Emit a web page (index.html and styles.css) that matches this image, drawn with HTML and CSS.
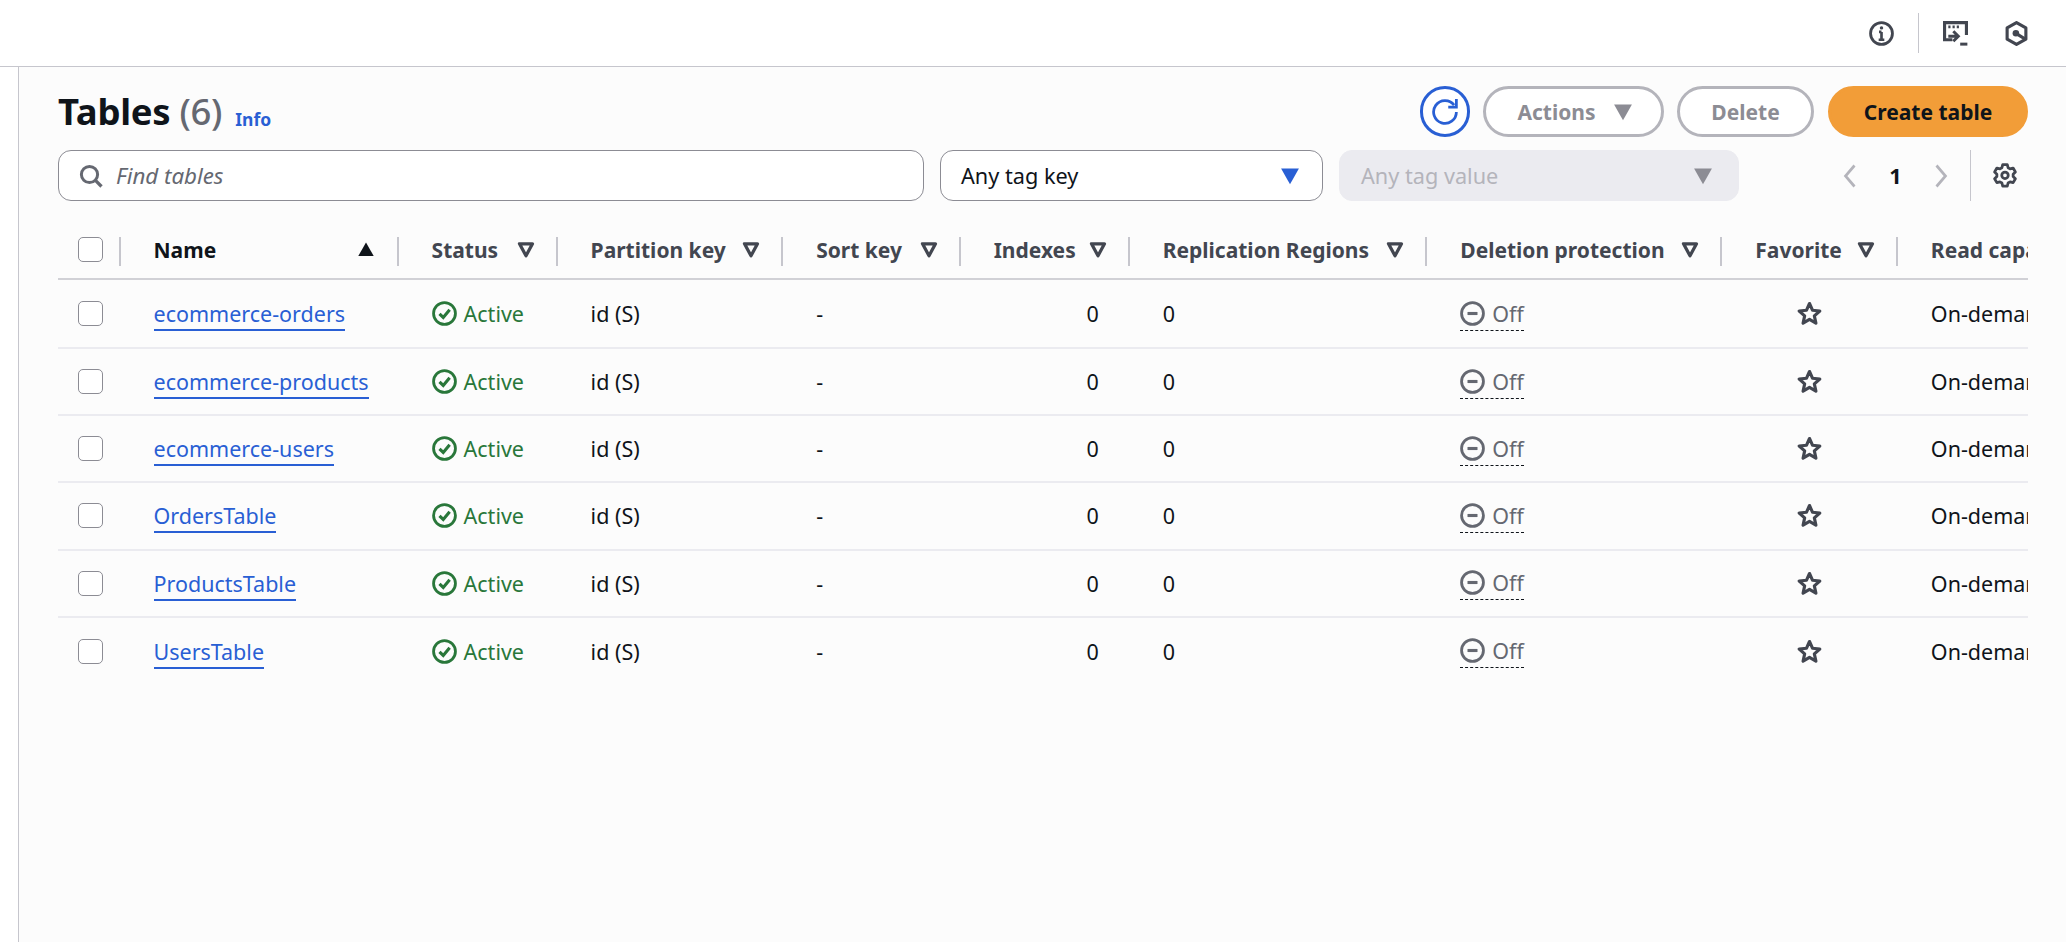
FILE: index.html
```html
<!DOCTYPE html>
<html lang="en">
<head>
<meta charset="utf-8">
<title>Tables</title>
<link rel="stylesheet" href="styles.css">
</head>
<body>
<svg class="defs" width="0" height="0" aria-hidden="true">
  <symbol id="i-active" viewBox="0 0 16 16"><circle cx="8" cy="8" r="7" fill="none" stroke="currentColor" stroke-width="1.8"/><path d="M4.8 8.2 7.2 10.5 11.3 5.6" fill="none" stroke="currentColor" stroke-width="2"/></symbol>
  <symbol id="i-off" viewBox="0 0 16 16"><circle cx="8" cy="8" r="7" fill="none" stroke="currentColor" stroke-width="1.8"/><path d="M4.8 8h6.4" fill="none" stroke="currentColor" stroke-width="2"/></symbol>
  <symbol id="i-star" viewBox="0 0 16 16"><path d="M8 1.6 9.9 5.9 14.6 6.4 11.1 9.5 12.1 14.2 8 11.8 3.9 14.2 4.9 9.5 1.4 6.4 6.1 5.9Z" fill="none" stroke="currentColor" stroke-width="2" stroke-linejoin="round"/></symbol>
  <symbol id="i-filter" viewBox="0 0 16 16"><path d="M2.8 3h10.4L8 12.6Z" fill="none" stroke="currentColor" stroke-width="2.6" stroke-linejoin="round"/></symbol>
  <symbol id="i-caret" viewBox="0 0 16 16"><path d="M1.5 2.5h13L8 14Z" fill="currentColor"/></symbol>
</svg>

<header class="topbar">
  <svg class="ico" viewBox="0 0 16 16"><circle cx="8" cy="8" r="7" fill="none" stroke="currentColor" stroke-width="1.8"/><path d="M8 7v5M6.2 12h3.6M6.4 7H8" fill="none" stroke="currentColor" stroke-width="1.7"/><circle cx="8" cy="4.4" r="1.1" fill="currentColor"/></svg>
  <span class="topsep"></span>
  <svg class="ico ico-term" viewBox="0 0 16 16"><path d="M6 12H1V1h14v8" fill="none" stroke="currentColor" stroke-width="2"/><path d="M3.4 3.8h1.4M6.1 3.8h1.4M8.8 3.8h1.4" stroke="currentColor" stroke-width="1.7"/><path d="M3.4 9.8h6.2M6.6 6.6l3.2 3.2-3.2 3.2" fill="none" stroke="currentColor" stroke-width="1.9"/><path d="M11 14.8h4.6" stroke="currentColor" stroke-width="1.9"/></svg>
  <svg class="ico ico-hex" viewBox="0 0 16 16"><path d="M8 1 14 4.4V11.6L8 15 2 11.6V4.4Z" fill="none" stroke="currentColor" stroke-width="2" stroke-linejoin="round"/><circle cx="7.6" cy="7.8" r="2.1" fill="currentColor"/><path d="M8.4 8.4 13.4 11.4" stroke="currentColor" stroke-width="2"/></svg>
</header>

<div class="shell">
  <aside class="rail"></aside>
  <main class="content">
    <div class="titlebar">
      <h1 class="title">Tables <span class="count">(6)</span></h1>
      <a class="info">Info</a>
      <div class="actions">
        <button class="btn btn-icon"><svg viewBox="0 0 16 16"><path d="M10 5h5V0" fill="none" stroke="currentColor" stroke-width="1.7"/><path d="M15 8a7 7 0 1 1-1.4-4.2" fill="none" stroke="currentColor" stroke-width="1.7"/></svg></button>
        <button class="btn btn-actions">Actions <svg class="caret"><use href="#i-caret"/></svg></button>
        <button class="btn btn-delete">Delete</button>
        <button class="btn btn-primary">Create table</button>
      </div>
    </div>

    <div class="filters">
      <div class="field search">
        <svg class="search-ico" viewBox="0 0 16 16"><circle cx="7" cy="7" r="5.4" fill="none" stroke="currentColor" stroke-width="2"/><path d="M10.8 10.8 15 15" stroke="currentColor" stroke-width="2.2"/></svg>
        <span>Find tables</span>
      </div>
      <div class="field select">Any tag key <svg class="caret caret-blue"><use href="#i-caret"/></svg></div>
      <div class="field select disabled">Any tag value <svg class="caret"><use href="#i-caret"/></svg></div>
      <div class="pager">
        <svg class="chev" viewBox="0 0 10 16"><path d="M8 1 2 8l6 7" fill="none" stroke="currentColor" stroke-width="1.8"/></svg>
        <span class="page">1</span>
        <svg class="chev" viewBox="0 0 10 16"><path d="M2 1l6 7-6 7" fill="none" stroke="currentColor" stroke-width="1.8"/></svg>
      </div>
      <div class="prefs">
        <svg class="gear" viewBox="0 0 16 16"><path d="M6.6 1h2.8l.5 1.9 1.2.7 1.9-.5 1.4 2.4-1.4 1.4v1.4l1.4 1.4-1.4 2.4-1.9-.5-1.2.7-.5 1.9H6.6l-.5-1.9-1.2-.7-1.9.5-1.4-2.4 1.4-1.4V6.9L1.6 5.5 3 3.1l1.9.5 1.2-.7Z" fill="none" stroke="currentColor" stroke-width="1.7" stroke-linejoin="round"/><circle cx="8" cy="7.6" r="2" fill="none" stroke="currentColor" stroke-width="1.7"/></svg>
      </div>
    </div>

    <div class="table-wrap">
      <table class="table">
        <colgroup>
          <col class="c-check"><col class="c-name"><col class="c-status"><col class="c-part"><col class="c-sort"><col class="c-idx"><col class="c-rep"><col class="c-del"><col class="c-fav"><col class="c-read">
        </colgroup>
        <thead>
          <tr>
            <th class="cell-check"><span class="box"></span></th>
            <th class="dark"><span class="th-in">Name<svg class="sort-ico"><use href="#i-caret"/></svg></span></th>
            <th><span class="th-in">Status<svg class="filter-ico"><use href="#i-filter"/></svg></span></th>
            <th><span class="th-in">Partition key<svg class="filter-ico"><use href="#i-filter"/></svg></span></th>
            <th><span class="th-in">Sort key<svg class="filter-ico"><use href="#i-filter"/></svg></span></th>
            <th><span class="th-in">Indexes<svg class="filter-ico"><use href="#i-filter"/></svg></span></th>
            <th><span class="th-in">Replication Regions<svg class="filter-ico"><use href="#i-filter"/></svg></span></th>
            <th><span class="th-in">Deletion protection<svg class="filter-ico"><use href="#i-filter"/></svg></span></th>
            <th><span class="th-in">Favorite<svg class="filter-ico"><use href="#i-filter"/></svg></span></th>
            <th class="last"><span class="th-in">Read capacity mode</span></th>
          </tr>
        </thead>
        <tbody>
          <tr>
            <td class="cell-check"><span class="box"></span></td>
            <td><a class="link">ecommerce-orders</a></td>
            <td><span class="active"><svg class="st"><use href="#i-active"/></svg>Active</span></td>
            <td>id (S)</td><td>-</td><td class="num">0</td><td>0</td>
            <td><span class="off"><svg class="st"><use href="#i-off"/></svg>Off</span></td>
            <td class="fav"><svg class="st"><use href="#i-star"/></svg></td>
            <td>On-demand</td>
          </tr>
          <tr>
            <td class="cell-check"><span class="box"></span></td>
            <td><a class="link">ecommerce-products</a></td>
            <td><span class="active"><svg class="st"><use href="#i-active"/></svg>Active</span></td>
            <td>id (S)</td><td>-</td><td class="num">0</td><td>0</td>
            <td><span class="off"><svg class="st"><use href="#i-off"/></svg>Off</span></td>
            <td class="fav"><svg class="st"><use href="#i-star"/></svg></td>
            <td>On-demand</td>
          </tr>
          <tr>
            <td class="cell-check"><span class="box"></span></td>
            <td><a class="link">ecommerce-users</a></td>
            <td><span class="active"><svg class="st"><use href="#i-active"/></svg>Active</span></td>
            <td>id (S)</td><td>-</td><td class="num">0</td><td>0</td>
            <td><span class="off"><svg class="st"><use href="#i-off"/></svg>Off</span></td>
            <td class="fav"><svg class="st"><use href="#i-star"/></svg></td>
            <td>On-demand</td>
          </tr>
          <tr>
            <td class="cell-check"><span class="box"></span></td>
            <td><a class="link">OrdersTable</a></td>
            <td><span class="active"><svg class="st"><use href="#i-active"/></svg>Active</span></td>
            <td>id (S)</td><td>-</td><td class="num">0</td><td>0</td>
            <td><span class="off"><svg class="st"><use href="#i-off"/></svg>Off</span></td>
            <td class="fav"><svg class="st"><use href="#i-star"/></svg></td>
            <td>On-demand</td>
          </tr>
          <tr>
            <td class="cell-check"><span class="box"></span></td>
            <td><a class="link">ProductsTable</a></td>
            <td><span class="active"><svg class="st"><use href="#i-active"/></svg>Active</span></td>
            <td>id (S)</td><td>-</td><td class="num">0</td><td>0</td>
            <td><span class="off"><svg class="st"><use href="#i-off"/></svg>Off</span></td>
            <td class="fav"><svg class="st"><use href="#i-star"/></svg></td>
            <td>On-demand</td>
          </tr>
          <tr>
            <td class="cell-check"><span class="box"></span></td>
            <td><a class="link">UsersTable</a></td>
            <td><span class="active"><svg class="st"><use href="#i-active"/></svg>Active</span></td>
            <td>id (S)</td><td>-</td><td class="num">0</td><td>0</td>
            <td><span class="off"><svg class="st"><use href="#i-off"/></svg>Off</span></td>
            <td class="fav"><svg class="st"><use href="#i-star"/></svg></td>
            <td>On-demand</td>
          </tr>
        </tbody>
      </table>
    </div>
  </main>
</div>
</body>
</html>
```

FILE: styles.css
```css
* { box-sizing: border-box; }
html, body { height: 100%; }
body {
  margin: 0;
  background: #fff;
  color: #0f141a;
  font-family: "Noto Sans", "Liberation Sans", sans-serif;
  font-size: 21.5px;
  overflow: hidden;
  display: flex;
  flex-direction: column;
}
.defs { position: absolute; }

.topbar {
  flex: 0 0 67px;
  background: #fff;
  border-bottom: 1px solid #c6c6cd;
  display: flex;
  align-items: center;
  justify-content: flex-end;
  padding-right: 37px;
  color: #424650;
}
.ico { width: 25px; height: 25px; }
.topsep { width: 1px; height: 40px; background: #c6c6cd; margin: 0 24px 0 24px; }
.ico-term { margin-right: 36px; }

.shell { flex: 1; display: flex; min-height: 0; }
.rail { flex: 0 0 19px; background: #fff; border-right: 1px solid #c6c6cd; }
.content {
  flex: 1;
  min-width: 0;
  background: #fcfcfc;
  padding: 19px 38px 0 39px;
  display: flex;
  flex-direction: column;
  gap: 13px;
}

.titlebar { display: flex; align-items: center; height: 51px; }
.title { margin: 0; font-size: 36.5px; font-weight: 700; line-height: 51px; letter-spacing: -0.3px; }
.count { font-weight: 500; color: #656871; }
.info { margin: 14px 0 0 13px; color: #295fd4; font-size: 17.5px; font-weight: 700; }
.actions { margin-left: auto; display: flex; gap: 13px; }
.btn {
  height: 51px;
  border-radius: 26px;
  border: 3px solid #b4b4bb;
  background: #fff;
  color: #8c8c94;
  font: 700 21px "Noto Sans", "Liberation Sans", sans-serif;
  padding: 0;
  display: flex;
  align-items: center;
  justify-content: center;
}
.btn-icon { width: 50px; border-color: #295fd4; color: #295fd4; }
.btn-icon svg { width: 26px; height: 26px; }
.btn-actions { width: 181px; gap: 16px; padding-left: 4px; }
.btn-delete { width: 137px; }
.btn-primary { width: 200px; margin-left: 1px; background: #f29d38; border-color: #f29d38; color: #0f141a; }
.caret { width: 22px; height: 22px; color: #8c8c94; }
.caret-blue { color: #295fd4; }

.filters { display: flex; align-items: stretch; height: 51px; font-size: 21.7px; }
.field {
  border: 1px solid #8c8c94;
  border-radius: 13px;
  background: #fff;
  display: flex;
  align-items: center;
}
.search { width: 866px; padding-left: 20px; gap: 13px; color: #656871; font-style: italic; font-size: 22.3px; }
.search-ico { width: 24px; height: 24px; color: #656871; }
.select { width: 383px; margin-left: 16px; padding: 0 21px 0 20px; justify-content: space-between; }
.disabled { width: 400px; background: #ebebf0; border-color: #ebebf0; color: #b4b4bb; padding: 0 24px 0 21px; }
.pager {
  margin-left: 102px;
  width: 109px;
  display: flex;
  align-items: center;
  justify-content: space-between;
  color: #b4b4bb;
}
.chev { width: 18px; height: 24px; }
.page { color: #0f141a; font-weight: 700; }
.prefs {
  margin-left: 20px;
  flex: 1;
  border-left: 1px solid #c6c6cd;
  display: flex;
  align-items: center;
  justify-content: flex-end;
  padding-right: 10px;
}
.gear { width: 26px; height: 26px; color: #424650; }

.table-wrap { margin-top: -13px; overflow: hidden; }
.table { border-collapse: separate; border-spacing: 0; table-layout: fixed; width: 2170px; }
.c-check { width: 62.5px; }
.c-name { width: 278px; }
.c-status { width: 159px; }
.c-part { width: 225.5px; }
.c-sort { width: 177.5px; }
.c-idx { width: 169px; }
.c-rep { width: 297.5px; }
.c-del { width: 295px; }
.c-fav { width: 175.5px; }
.c-read { width: 330px; }

th {
  height: 79px;
  padding: 20px 0 0 33px;
  text-align: left;
  font-size: 21px;
  font-weight: 700;
  color: #424650;
  border-bottom: 2px solid #d1d1d6;
  position: relative;
  white-space: nowrap;
}
th.dark { color: #0f141a; }
th::after {
  content: "";
  position: absolute;
  right: 0;
  top: 36px;
  width: 2px;
  height: 29px;
  background: #c6c6cd;
}
th.last::after { display: none; }
.th-in { display: flex; align-items: center; justify-content: space-between; padding-right: 22px; }
.last .th-in { padding-right: 0; }
.filter-ico { width: 20px; height: 20px; flex: none; }
.sort-ico { width: 22px; height: 19px; flex: none; transform: scaleY(-1); color: #0f141a; }

td {
  height: 67.2px;
  padding: 0 0 0 33px;
  border-bottom: 2px solid #ebebf0;
  white-space: nowrap;
}
tbody tr:first-child td { height: 69px; }
tr:last-child td { border-bottom: 0; }
.cell-check { padding-left: 20px; }
th.cell-check { padding-top: 20px; padding-left: 20px; }
.box {
  display: block;
  width: 25px;
  height: 25px;
  border: 1px solid #8c8c94;
  border-radius: 5px;
  background: #fff;
}
.link { color: #295fd4; border-bottom: 2px solid #295fd4; padding-bottom: 1px; }
.num { text-align: right; padding-right: 31px; }
.st { width: 25px; height: 25px; flex: none; display: block; }
.active { display: inline-flex; align-items: center; gap: 7px; color: #29773a; vertical-align: middle; padding-bottom: 2px; }
.off {
  display: inline-flex;
  align-items: center;
  gap: 7px;
  color: #656871;
  line-height: 25px;
  padding: 4px 0 4px;
  border-bottom: 1px dashed #0f141a;
  vertical-align: middle;
}
.fav { padding-left: 75px; color: #424650; }
```
